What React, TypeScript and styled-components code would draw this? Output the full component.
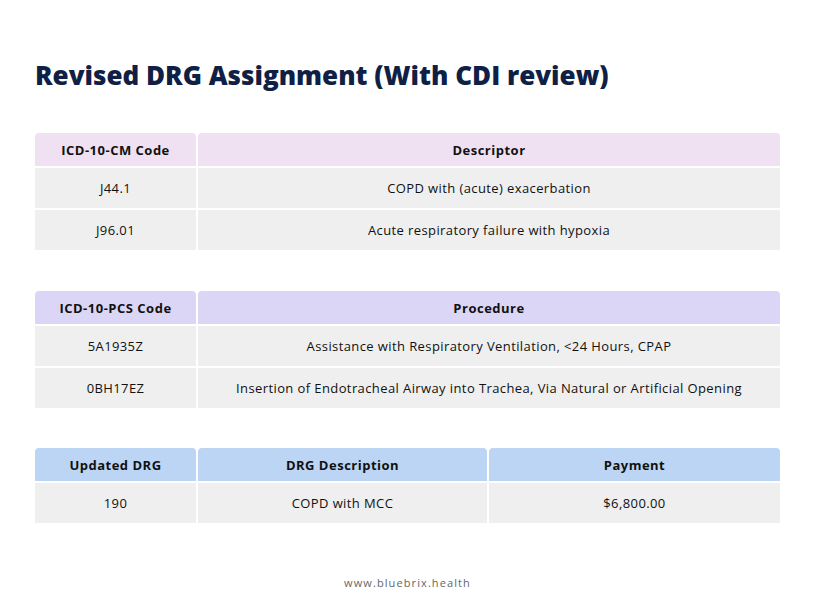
import React from "react";
import styled, { createGlobalStyle } from "styled-components";

const Global = createGlobalStyle`
  html, body { margin: 0; padding: 0; background: #ffffff; }
  body { font-family: "Open Sans", "Liberation Sans", sans-serif; }
`;

const Page = styled.div`
  width: 816px;
  height: 612px;
  box-sizing: border-box;
  padding: 57px 36px 0 35px;
  display: flex;
  flex-direction: column;
`;

const Title = styled.h1`
  margin: 0 0 40px 0;
  font-family: "Open Sans", "Liberation Sans", sans-serif;
  font-weight: 800;
  font-size: 26px;
  line-height: 36px;
  color: #0f1f45;
  letter-spacing: 0;
`;

const Table = styled.div<{ $cols: string; $mb: number }>`
  display: grid;
  grid-template-columns: ${(p) => p.$cols};
  column-gap: 2px;
  row-gap: 2px;
  margin-bottom: ${(p) => p.$mb}px;
`;

const Head = styled.div<{ $bg: string }>`
  background: ${(p) => p.$bg};
  height: 33px;
  border-radius: 4px 4px 0 0;
  display: flex;
  align-items: center;
  justify-content: center;
  font-weight: 700;
  font-size: 13px;
  letter-spacing: 0.5px;
  color: #111111;
`;

const Cell = styled.div`
  background: #efefef;
  height: 40px;
  display: flex;
  align-items: center;
  justify-content: center;
  font-size: 13px;
  letter-spacing: 0.4px;
  color: #111111;
`;

const Footer = styled.div`
  margin-top: auto;
  margin-bottom: 22px;
  text-align: center;
  font-size: 11px;
  letter-spacing: 1.1px;
  color: #666666;
`;

type T = { heads: string[]; rows: string[][]; bg: string; cols: string; mb: number };

const tables: T[] = [
  {
    heads: ["ICD-10-CM Code", "Descriptor"],
    rows: [
      ["J44.1", "COPD with (acute) exacerbation"],
      ["J96.01", "Acute respiratory failure with hypoxia"],
    ],
    bg: "#efe1f2",
    cols: "161px 1fr",
    mb: 41,
  },
  {
    heads: ["ICD-10-PCS Code", "Procedure"],
    rows: [
      ["5A1935Z", "Assistance with Respiratory Ventilation, <24 Hours, CPAP"],
      ["0BH17EZ", "Insertion of Endotracheal Airway into Trachea, Via Natural or Artificial Opening"],
    ],
    bg: "#dbd6f6",
    cols: "161px 1fr",
    mb: 40,
  },
  {
    heads: ["Updated DRG", "DRG Description", "Payment"],
    rows: [["190", "COPD with MCC", "$6,800.00"]],
    bg: "#bcd5f4",
    cols: "161px 289px 1fr",
    mb: 0,
  },
];

export default function App() {
  return (
    <>
      <Global />
      <Page>
        <Title>Revised DRG Assignment (With CDI review)</Title>
        {tables.map((t, i) => (
          <Table key={i} $cols={t.cols} $mb={t.mb}>
            {t.heads.map((h) => (
              <Head key={h} $bg={t.bg}>{h}</Head>
            ))}
            {t.rows.map((r) => r.map((c, j) => <Cell key={j + c}>{c}</Cell>))}
          </Table>
        ))}
        <Footer>www.bluebrix.health</Footer>
      </Page>
    </>
  );
}
